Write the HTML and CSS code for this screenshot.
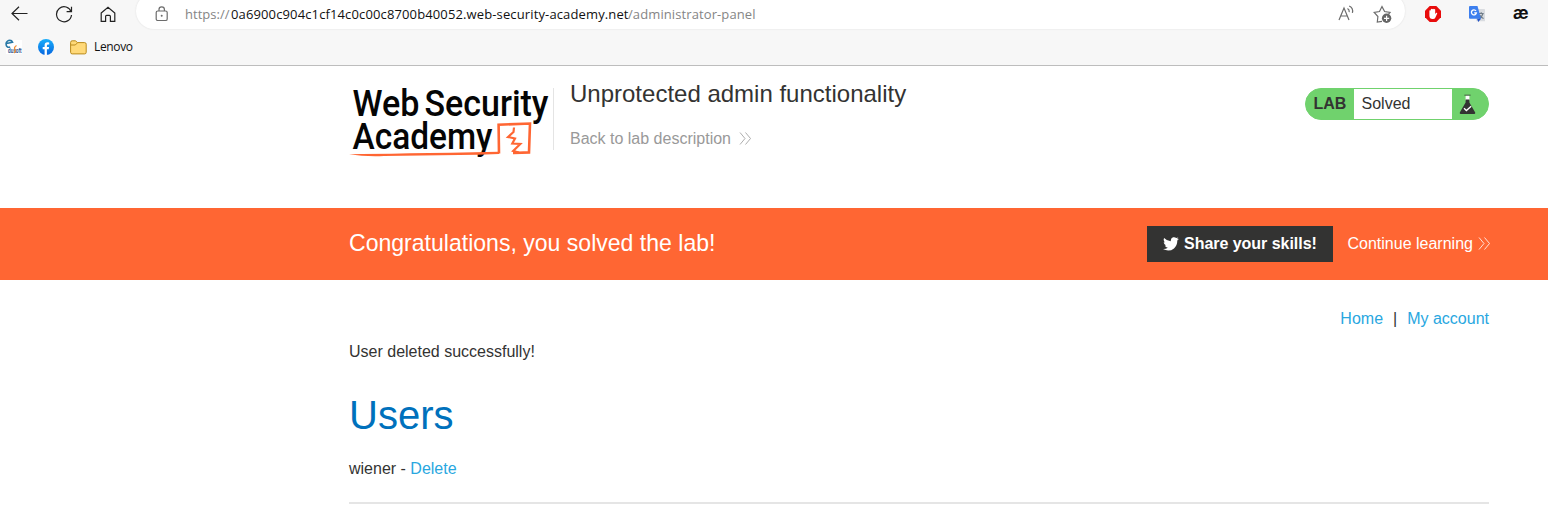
FILE: index.html
```html
<!DOCTYPE html>
<html lang="en">
<head>
<meta charset="utf-8">
<title>Unprotected admin functionality</title>
<link rel="stylesheet" href="styles.css">
</head>
<body>
<header class="browser">
  <div class="toolbar">
    <svg class="back" width="18" height="16" viewBox="0 0 18 16"><path d="M16.5 7.5H1M8 .8L1 7.5L8 14.2"/></svg>
    <svg class="reload" width="18" height="18" viewBox="0 0 18 18"><path d="M16.2 7A7.5 7.5 0 1 0 16.5 10M16.5 1.8V6.6H11.6"/></svg>
    <svg class="home" width="16" height="17" viewBox="0 0 16 17"><path d="M1.2 7L8 1.3L14.8 7V15.3H10.4V10.5Q10.4 9.3 9.4 9.3H6.6Q5.6 9.3 5.6 10.5V15.3H1.2Z"/></svg>
    <div class="address">
      <svg class="lock" width="14" height="16" viewBox="0 0 14 16"><rect x="1.2" y="5" width="11" height="9.5" rx="1.6"/><path d="M4 5V3.5A2.7 2.7 0 0 1 9.4 3.5V5"/><circle class="lock-dot" cx="6.7" cy="9.8" r="1"/></svg>
      <div class="url"><span class="scheme">https://</span><span class="host">0a6900c904c1cf14c0c00c8700b40052.web-security-academy.net</span><span class="path">/administrator-panel</span></div>
      <svg class="read" width="18" height="17" viewBox="0 0 18 17"><path d="M1 15L6 3L11 15M2.8 11H9.2M9.5 3.5Q11.6 4.8 11.2 7.2M11.2 1Q15.6 3.2 14.4 7.8"/></svg>
      <svg class="star" width="20" height="19" viewBox="0 0 20 19"><path d="M9 16.4L4.3 17L4.9 11.5L1.2 7.5L6.5 6.5L9 1.6L11.6 6.5L17 7.5L15.6 9"/><circle cx="13.6" cy="13.3" r="4.7"/><path class="plus" d="M11 13.3H16.2M13.6 10.7V15.9"/></svg>
    </div>
    <svg class="adblock" width="16" height="16" viewBox="0 0 16 16"><path fill="#e80c0c" d="M4.7 0H11.3L16 4.7V11.3L11.3 16H4.7L0 11.3V4.7Z"/><path fill="#fff" d="M4.4 8V4.5Q5.2 3.8 5.8 4.5V3.3Q6.6 2.5 7.3 3.2Q8.1 2.2 8.8 3.2Q9.8 2.7 10.2 3.6V8L11.3 6.7Q12.4 6.4 12.2 7.5L10.4 11.5Q9.7 13.3 7.5 13.1Q4.4 13 4.4 9.5Z"/></svg>
    <svg class="translate" width="17" height="16" viewBox="0 0 17 16"><path fill="#d9dce0" d="M5 3H15.3Q16 3 16 3.8V15.2H7.5Z"/><path fill="none" stroke="#6f7c88" d="M9.6 7.5H14.7M12.2 6.2V7.5M14 7.5Q13 11 10.2 12.5M10.7 9Q12 11.5 14.6 12.5"/><path fill="#3d7fee" d="M1 0H8.5L12 12.7H1Q0 12.7 0 11.7V1Q0 0 1 0Z"/><path fill="#2353c6" d="M8 12.7H12L9.3 16Z"/><path fill="none" stroke="#fff" stroke-width="1.3" d="M7 5A2.5 2.5 0 1 0 7.4 6.8H5.2"/></svg>
    <span class="ae">æ</span>
  </div>
  <div class="bookmarks">
    <svg class="edusoft" width="17" height="17" viewBox="0 0 17 17"><rect x="1" y="1" width="16" height="14" fill="#fff"/><path class="swirl" d="M1.5 4.5L7.6 3.2Q6.6.8 3.6 1.5Q.5 2.8 1.2 6Q1.8 9 5.2 8"/><text class="soft" x="3" y="13.8" textLength="13.5" lengthAdjust="spacingAndGlyphs">dusoft</text><path fill="none" stroke="#f08a32" stroke-width="1.3" d="M11.5 6.5Q8.5 8.5 10 10.5Q11 12 9 14"/></svg>
    <svg class="facebook" width="16" height="16" viewBox="0 0 16 16"><defs><linearGradient id="fb" x2="0" y2="1"><stop stop-color="#19aefb"/><stop offset="1" stop-color="#0766df"/></linearGradient></defs><circle cx="8" cy="8" r="8" fill="url(#fb)"/><path fill="#fff" d="M6.6 16V10.3H4.7V8H6.6V6.5Q6.6 3.2 9.7 3.3L11.2 3.4V5.4H10Q8.9 5.4 8.9 6.5V8H11.1L10.7 10.3H8.9V16Z"/></svg>
    <svg class="folder" width="17" height="15" viewBox="0 0 17 15"><path fill="#ffd979" stroke="#b98a1c" d="M.6 2.5Q.6.8 2.2.8H5.6L7.4 2.6H14.6Q16.2 2.6 16.2 4.2V12.3Q16.2 13.9 14.6 13.9H2.2Q.6 13.9.6 12.3Z"/><path fill="none" stroke="#b98a1c" d="M.8 5H5.3L7.5 2.8"/></svg>
    <span class="label">Lenovo</span>
  </div>
</header>

<section class="lab-header">
  <svg class="logo" width="204" height="76" viewBox="349 86 204 76">
    <g class="logo-text">
      <text x="352.5" y="116" textLength="67" lengthAdjust="spacingAndGlyphs">Web</text>
      <text x="424.5" y="116" textLength="124" lengthAdjust="spacingAndGlyphs">Security</text>
      <text x="352.5" y="149" textLength="140" lengthAdjust="spacingAndGlyphs">Academy</text>
    </g>
    <path class="logo-fill" d="M349 154.2Q395 153.8 499 151.8V154L478 154.7L384 156Q365 156.8 349 154.2Z"/>
    <path class="logo-box" d="M499 153.5L498.6 124.7L530 123.5L529 152.4L513 153"/>
    <path class="logo-bolt" d="M514 127.5L513.5 132L508 137L515 138.5L512.3 143.5L520.3 144L513.2 151L519 152.6"/>
  </svg>
  <div class="title">
    <h2>Unprotected admin functionality</h2>
    <a class="back-link">Back to lab description <svg width="13" height="13" viewBox="0 0 13 13"><path d="M1 .5L6 6.5L1 12.5M6.5.5L11.5 6.5L6.5 12.5"/></svg></a>
  </div>
  <div class="status">
    <strong>LAB</strong><span>Solved</span>
    <svg width="18" height="22" viewBox="0 0 18 22"><path fill="#fff" d="M6.6 1.5H10.4V6.5H6.6Z"/><path fill="#333332" d="M5.4.8H11.6V1.5H5.4ZM6.6 5.5H10.4V8.4L16.2 18.5Q16.6 20 15 20H2Q.4 20 .8 18.5L6.6 8.4Z"/><path fill="none" stroke="#fff" stroke-width="1.3" d="M5 14.2L7.4 16.5L12.2 12.2"/></svg>
  </div>
</section>

<section class="banner">
  <h4>Congratulations, you solved the lab!</h4>
  <a class="share"><svg width="16" height="14" viewBox="0 0 16 14"><path fill="#fff" d="M16 1.7L14.3 3.4Q14.4 8.2 11 11.4Q6 15.4 0 12.1Q2.7 12.3 4.8 10.8Q2.5 10.5 1.8 8.5H3.2Q.7 7.6.7 5.1L2.1 5.5Q-.1 3.6 1.1 1Q4 4.1 7.8 4.2Q7.5 1.2 10 .3Q12-.2 13.2 1.1L15.3.4L14 2.2Z"/></svg>Share your skills!</a>
  <a class="continue">Continue learning <svg width="13" height="13" viewBox="0 0 13 13"><path d="M1 .5L6 6.5L1 12.5M6.5.5L11.5 6.5L6.5 12.5"/></svg></a>
</section>

<main>
  <nav><a>Home</a><span>|</span><a>My account</a></nav>
  <p class="message">User deleted successfully!</p>
  <h1>Users</h1>
  <p class="user">wiener - <a>Delete</a></p>
  <hr>
</main>
</body>
</html>
```
FILE: styles.css
```css
* { box-sizing: border-box; }
body { margin: 0; height: 525px; overflow: hidden; background: #fff; color: #333332; font: 16px/24px "Liberation Sans", Arial, sans-serif; }
h1, h2, h4, p { margin: 0; font-weight: 400; }
svg { display: block; flex: none; }

.browser { height: 66px; background: #f7f7f7; border-bottom: 1px solid #bdbdbd; font-family: "Open Sans", "Noto Sans", sans-serif; }
.toolbar { display: flex; align-items: center; height: 29px; }
.toolbar svg { fill: none; stroke: #222; stroke-width: 1.2; }
.back { margin: -2px 0 0 11px; }
.toolbar .reload { margin: -1px 0 0 26px; }
.toolbar .home { margin: -1px 0 0 27px; }
.address { display: flex; align-items: center; width: 1269px; height: 36px; margin: -7px 1px 0 20px; padding: 7px 11px 0 19px; border-radius: 18px; background: #fff; box-shadow: 0 0 2px #ddd; }
.toolbar .address svg { stroke: #6c6c6c; }
.toolbar .lock { margin-top: -2px; }
.toolbar .lock-dot { fill: #6c6c6c; stroke: none; }
.url { width: 1153px; margin: -2px 0 0 16px; color: #858585; font-size: 13px; line-height: 20px; white-space: nowrap; }
.url span { display: inline-block; }
.scheme { width: 46px; letter-spacing: .02px; }
.host { width: 397px; color: #111; letter-spacing: .13px; }
.path { letter-spacing: .1px; }
.read { margin-top: -3px; }
.star { margin: 0 0 0 17px; }
.star circle { fill: #666; stroke: none; }
.address .star .plus { stroke: #fff; }
.toolbar .adblock, .toolbar .translate { stroke: none; }
.adblock { margin: -1px 0 0 19px; }
.translate { margin: -1px 0 0 28px; }
.ae { margin: -3px 0 0 27px; color: #111; font: 700 17px/24px Inter, sans-serif; }
.bookmarks { display: flex; align-items: center; height: 36px; padding-left: 5px; color: #111; font-size: 12px; }
.label { letter-spacing: -.35px; }
.facebook { margin-left: 16px; }
.folder { margin: 0 7px 0 16px; }
.swirl { fill: none; stroke: #2878a5; stroke-width: 1.6; }
.soft { fill: #204d8e; font: 700 8px "Liberation Sans", sans-serif; }
.edusoft, .logo { overflow: visible; }

.lab-header { display: flex; align-items: flex-start; width: 1140px; height: 142px; margin-left: 349px; padding-top: 20px; }
.logo-text { fill: #050505; font: 500 37px Roboto, sans-serif; }
.logo-fill { fill: #ff6633; }
.logo-box { fill: none; stroke: #ff6633; stroke-width: 2.6; }
.logo-bolt { fill: none; stroke: #ff6633; stroke-width: 2.2; }
.title { width: 752px; height: 62px; margin-top: 2px; padding-left: 16px; border-left: 1px solid #e4e4e4; }
.title h2 { margin-top: -8px; font-size: 24px; line-height: 28px; }
.back-link { display: flex; align-items: center; gap: 8px; margin-top: 19px; }
.back-link svg, .continue svg { margin-top: -1px; fill: none; stroke: currentColor; stroke-width: .8; }
.status { display: flex; width: 184px; height: 32px; margin-top: 2px; border: 1px solid #70d26d; border-radius: 16px; background: #70d26d; line-height: 30px; }
.status strong { width: 48px; padding-left: 7.5px; }
.status span { width: 98px; padding-left: 7.5px; background: #fff; }
.status svg { margin: 5px 0 0 6.5px; }

.banner { display: flex; align-items: center; height: 72px; padding: 0 58px 0 349px; background: #ff6633; color: #fff; }
.banner h4 { flex: none; width: 798px; margin-top: -2px; font-size: 23.05px; line-height: 28px; }
.share { display: flex; flex: none; align-items: center; gap: 5px; width: 186px; height: 36px; padding-left: 16px; background: #333332; font-weight: 700; letter-spacing: -.03px; }
.continue { display: flex; align-items: center; gap: 5px; margin-left: 14.5px; white-space: nowrap; }

main { width: 1140px; margin-left: 349px; padding-top: 27px; }
a { color: #29a7df; }
.back-link { color: #999; }
.share, .continue { color: #fff; }
nav { display: flex; justify-content: flex-end; gap: 10px; }
.message { margin-top: 9px; }
h1 { margin-top: 27px; color: #0071bc; font-size: 40px; line-height: 48px; }
.user { margin-top: 18px; }
hr { height: 2px; margin: 21px 0 0; border: 0; background: #e5e5e5; }
```
